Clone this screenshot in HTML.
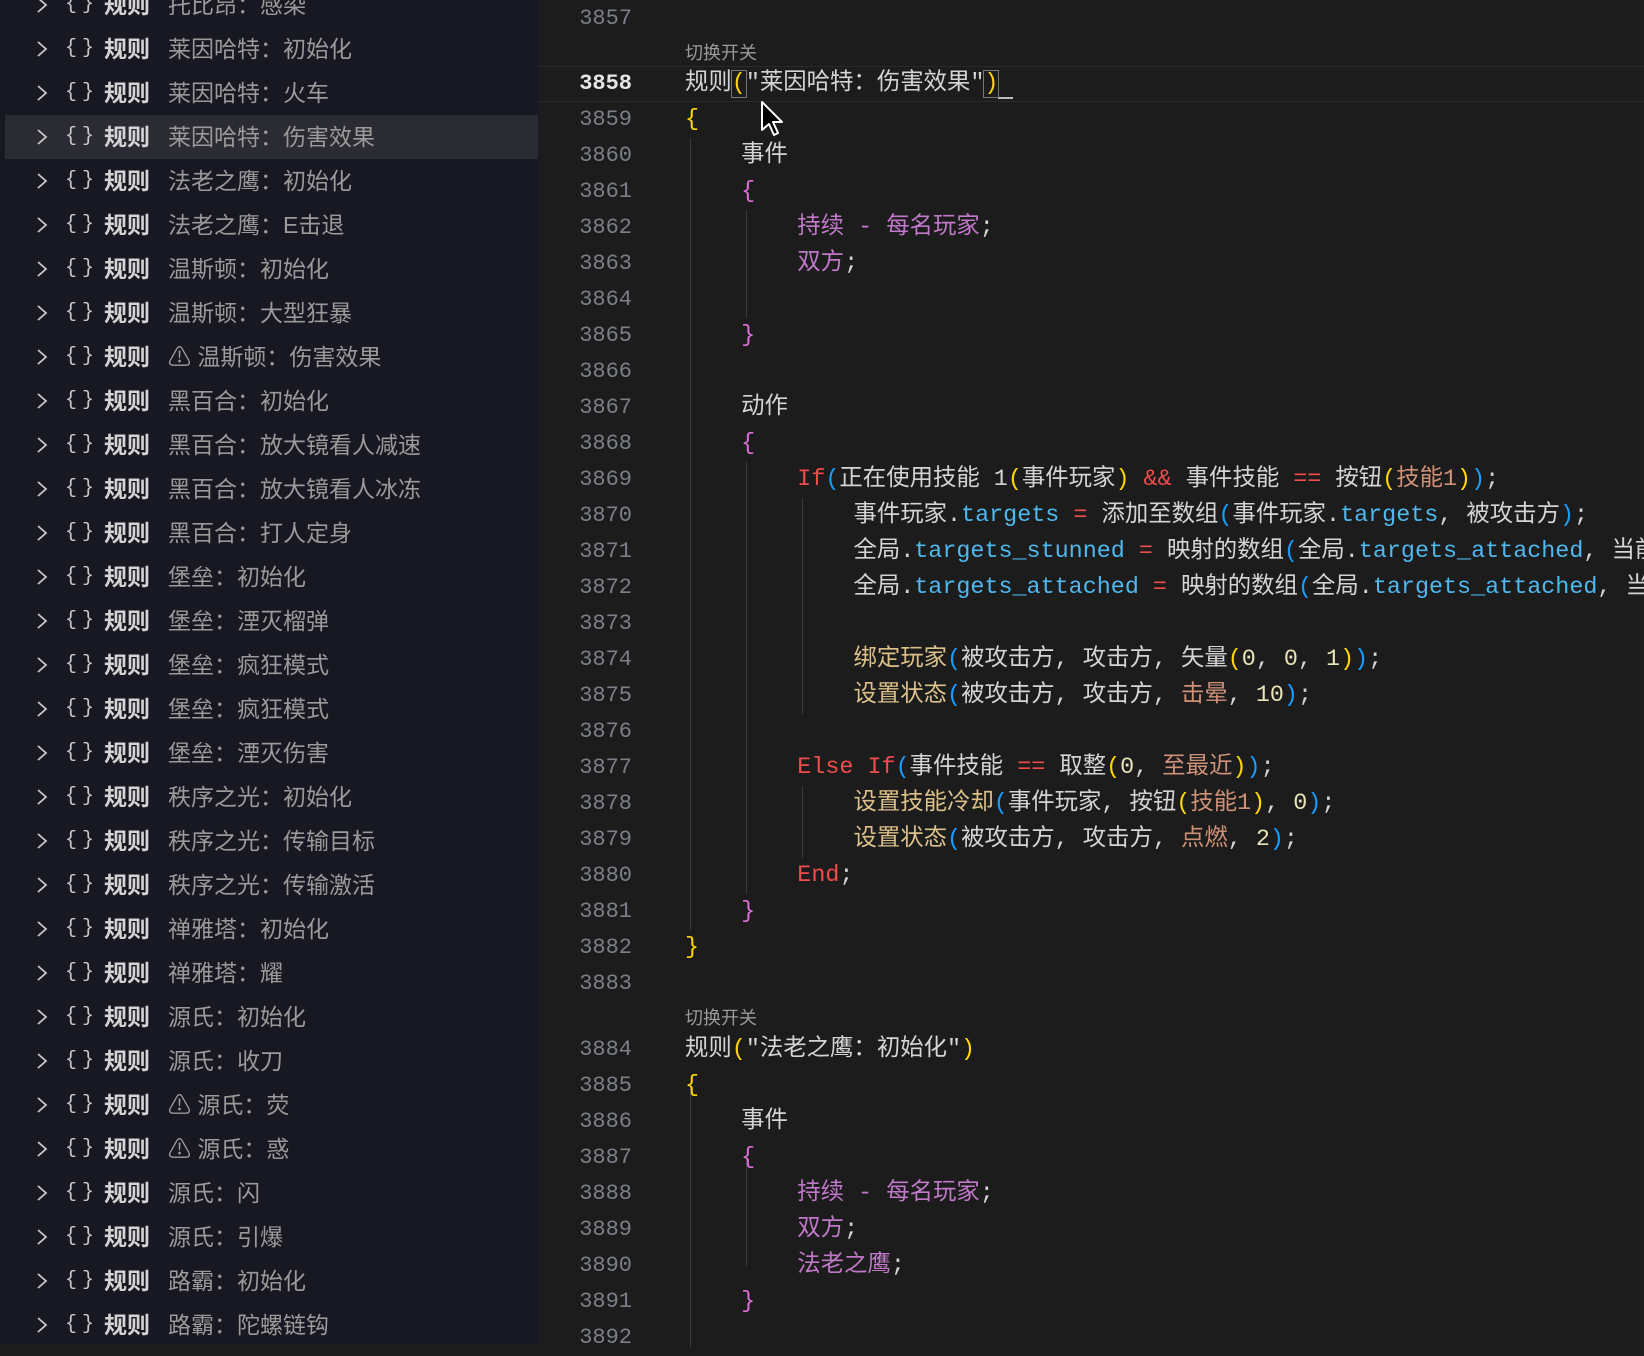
<!DOCTYPE html>
<html><head><meta charset="utf-8"><style>
*{margin:0;padding:0;box-sizing:border-box}
body{width:1644px;height:1344px;overflow:hidden;background:#1c1c1c;position:relative;font-family:"Liberation Mono","Noto Sans CJK SC",monospace}
#side{position:absolute;left:0;top:0;width:538px;height:1344px;background:#171821}
.row{position:absolute;left:0;width:538px;height:44px;line-height:44px;font-family:"Liberation Sans","Noto Sans CJK SC",sans-serif;font-size:23px;color:#9a9a9a;white-space:nowrap}
.row.sel{background:#2b2c33;left:5px;width:533px}
.row .ch{position:absolute;left:36px;top:13px;width:12px;height:18px}
.row .br{position:absolute;left:65px;color:#c8c8c8;letter-spacing:5px;font-family:"Liberation Mono",monospace;font-size:20px}
.row .kw{position:absolute;left:104px;color:#d4d4d4;font-weight:bold}
.row .lb{position:absolute;left:168px}
.row.sel .ch{left:31px}.row.sel .br{left:60px}.row.sel .kw{left:99px}.row.sel .lb{left:163px}
.ln{position:absolute;left:540px;width:92px;text-align:right;font-size:22px;color:#7b7f87;height:36px;line-height:36px;font-family:"Liberation Mono",monospace}
.ln.act{color:#e6e6e6;font-weight:bold}
.cl{position:absolute;left:685px;height:36px;line-height:36px;font-size:23.4px;color:#d4d4d4;white-space:pre}
.lens{position:absolute;left:685px;font-size:18px;color:#9a9a9a;font-family:"Liberation Sans","Noto Sans CJK SC",sans-serif}
.g{position:absolute;width:1px;background:#3c3c3c}
.y{color:#ffd700}.p{color:#da70d6}.b{color:#179fff}.r{color:#f14c4c}.v{color:#c078c8}.f{color:#dcc08a}.o{color:#ce9178}.i{color:#4fb8ee}.n{color:#e8e3b8}
.box{outline:1px solid #777;}
#code{position:absolute;left:0;top:3px;width:1644px;height:1344px}
</style></head><body>
<svg width="0" height="0" style="position:absolute"><defs><symbol id="chev" viewBox="0 0 12 18"><path d="M2 2 L10 9 L2 16" fill="none" stroke="#c8c8c8" stroke-width="1.8"/></symbol></defs></svg>
<div id="side">
<div class="row" style="top:-17px"><svg class="ch"><use href="#chev"/></svg><span class="br">{}</span><span class="kw">规则</span><span class="lb">托比昂：感染</span></div>
<div class="row" style="top:27px"><svg class="ch"><use href="#chev"/></svg><span class="br">{}</span><span class="kw">规则</span><span class="lb">莱因哈特：初始化</span></div>
<div class="row" style="top:71px"><svg class="ch"><use href="#chev"/></svg><span class="br">{}</span><span class="kw">规则</span><span class="lb">莱因哈特：火车</span></div>
<div class="row sel" style="top:115px"><svg class="ch"><use href="#chev"/></svg><span class="br">{}</span><span class="kw">规则</span><span class="lb">莱因哈特：伤害效果</span></div>
<div class="row" style="top:159px"><svg class="ch"><use href="#chev"/></svg><span class="br">{}</span><span class="kw">规则</span><span class="lb">法老之鹰：初始化</span></div>
<div class="row" style="top:203px"><svg class="ch"><use href="#chev"/></svg><span class="br">{}</span><span class="kw">规则</span><span class="lb">法老之鹰：E击退</span></div>
<div class="row" style="top:247px"><svg class="ch"><use href="#chev"/></svg><span class="br">{}</span><span class="kw">规则</span><span class="lb">温斯顿：初始化</span></div>
<div class="row" style="top:291px"><svg class="ch"><use href="#chev"/></svg><span class="br">{}</span><span class="kw">规则</span><span class="lb">温斯顿：大型狂暴</span></div>
<div class="row" style="top:335px"><svg class="ch"><use href="#chev"/></svg><span class="br">{}</span><span class="kw">规则</span><span class="lb">⚠ 温斯顿：伤害效果</span></div>
<div class="row" style="top:379px"><svg class="ch"><use href="#chev"/></svg><span class="br">{}</span><span class="kw">规则</span><span class="lb">黑百合：初始化</span></div>
<div class="row" style="top:423px"><svg class="ch"><use href="#chev"/></svg><span class="br">{}</span><span class="kw">规则</span><span class="lb">黑百合：放大镜看人减速</span></div>
<div class="row" style="top:467px"><svg class="ch"><use href="#chev"/></svg><span class="br">{}</span><span class="kw">规则</span><span class="lb">黑百合：放大镜看人冰冻</span></div>
<div class="row" style="top:511px"><svg class="ch"><use href="#chev"/></svg><span class="br">{}</span><span class="kw">规则</span><span class="lb">黑百合：打人定身</span></div>
<div class="row" style="top:555px"><svg class="ch"><use href="#chev"/></svg><span class="br">{}</span><span class="kw">规则</span><span class="lb">堡垒：初始化</span></div>
<div class="row" style="top:599px"><svg class="ch"><use href="#chev"/></svg><span class="br">{}</span><span class="kw">规则</span><span class="lb">堡垒：湮灭榴弹</span></div>
<div class="row" style="top:643px"><svg class="ch"><use href="#chev"/></svg><span class="br">{}</span><span class="kw">规则</span><span class="lb">堡垒：疯狂模式</span></div>
<div class="row" style="top:687px"><svg class="ch"><use href="#chev"/></svg><span class="br">{}</span><span class="kw">规则</span><span class="lb">堡垒：疯狂模式</span></div>
<div class="row" style="top:731px"><svg class="ch"><use href="#chev"/></svg><span class="br">{}</span><span class="kw">规则</span><span class="lb">堡垒：湮灭伤害</span></div>
<div class="row" style="top:775px"><svg class="ch"><use href="#chev"/></svg><span class="br">{}</span><span class="kw">规则</span><span class="lb">秩序之光：初始化</span></div>
<div class="row" style="top:819px"><svg class="ch"><use href="#chev"/></svg><span class="br">{}</span><span class="kw">规则</span><span class="lb">秩序之光：传输目标</span></div>
<div class="row" style="top:863px"><svg class="ch"><use href="#chev"/></svg><span class="br">{}</span><span class="kw">规则</span><span class="lb">秩序之光：传输激活</span></div>
<div class="row" style="top:907px"><svg class="ch"><use href="#chev"/></svg><span class="br">{}</span><span class="kw">规则</span><span class="lb">禅雅塔：初始化</span></div>
<div class="row" style="top:951px"><svg class="ch"><use href="#chev"/></svg><span class="br">{}</span><span class="kw">规则</span><span class="lb">禅雅塔：耀</span></div>
<div class="row" style="top:995px"><svg class="ch"><use href="#chev"/></svg><span class="br">{}</span><span class="kw">规则</span><span class="lb">源氏：初始化</span></div>
<div class="row" style="top:1039px"><svg class="ch"><use href="#chev"/></svg><span class="br">{}</span><span class="kw">规则</span><span class="lb">源氏：收刀</span></div>
<div class="row" style="top:1083px"><svg class="ch"><use href="#chev"/></svg><span class="br">{}</span><span class="kw">规则</span><span class="lb">⚠ 源氏：荧</span></div>
<div class="row" style="top:1127px"><svg class="ch"><use href="#chev"/></svg><span class="br">{}</span><span class="kw">规则</span><span class="lb">⚠ 源氏：惑</span></div>
<div class="row" style="top:1171px"><svg class="ch"><use href="#chev"/></svg><span class="br">{}</span><span class="kw">规则</span><span class="lb">源氏：闪</span></div>
<div class="row" style="top:1215px"><svg class="ch"><use href="#chev"/></svg><span class="br">{}</span><span class="kw">规则</span><span class="lb">源氏：引爆</span></div>
<div class="row" style="top:1259px"><svg class="ch"><use href="#chev"/></svg><span class="br">{}</span><span class="kw">规则</span><span class="lb">路霸：初始化</span></div>
<div class="row" style="top:1303px"><svg class="ch"><use href="#chev"/></svg><span class="br">{}</span><span class="kw">规则</span><span class="lb">路霸：陀螺链钩</span></div>
</div>

<div id="code">
<div class="g" style="left:690px;top:135px;height:792px"></div>
<div class="g" style="left:746px;top:207px;height:108px"></div>
<div class="g" style="left:746px;top:459px;height:432px"></div>
<div class="g" style="left:802px;top:495px;height:216px"></div>
<div class="g" style="left:802px;top:783px;height:72px"></div>
<div class="g" style="left:690px;top:1083px;height:261px"></div>
<div class="g" style="left:746px;top:1155px;height:108px"></div>

<div style="position:absolute;left:538px;top:63px;width:1106px;height:36px;border-top:1px solid #2a2a2a;border-bottom:1px solid #2a2a2a"></div>

<div class="ln" style="top:-2px">3857</div>
<div class="lens" style="top:36px">切换开关</div>
<div class="ln act" style="top:63px">3858</div>
<div class="ln" style="top:99px">3859</div>
<div class="ln" style="top:135px">3860</div>
<div class="ln" style="top:171px">3861</div>
<div class="ln" style="top:207px">3862</div>
<div class="ln" style="top:243px">3863</div>
<div class="ln" style="top:279px">3864</div>
<div class="ln" style="top:315px">3865</div>
<div class="ln" style="top:351px">3866</div>
<div class="ln" style="top:387px">3867</div>
<div class="ln" style="top:423px">3868</div>
<div class="ln" style="top:459px">3869</div>
<div class="ln" style="top:495px">3870</div>
<div class="ln" style="top:531px">3871</div>
<div class="ln" style="top:567px">3872</div>
<div class="ln" style="top:603px">3873</div>
<div class="ln" style="top:639px">3874</div>
<div class="ln" style="top:675px">3875</div>
<div class="ln" style="top:711px">3876</div>
<div class="ln" style="top:747px">3877</div>
<div class="ln" style="top:783px">3878</div>
<div class="ln" style="top:819px">3879</div>
<div class="ln" style="top:855px">3880</div>
<div class="ln" style="top:891px">3881</div>
<div class="ln" style="top:927px">3882</div>
<div class="ln" style="top:963px">3883</div>
<div class="lens" style="top:1001px">切换开关</div>
<div class="ln" style="top:1029px">3884</div>
<div class="ln" style="top:1065px">3885</div>
<div class="ln" style="top:1101px">3886</div>
<div class="ln" style="top:1137px">3887</div>
<div class="ln" style="top:1173px">3888</div>
<div class="ln" style="top:1209px">3889</div>
<div class="ln" style="top:1245px">3890</div>
<div class="ln" style="top:1281px">3891</div>
<div class="ln" style="top:1317px">3892</div>

<div class="cl" style="top:63px">规则<span class="y box">(</span>"莱因哈特：伤害效果"<span class="y box">)</span><span style="border-bottom:2px solid #bbb"> </span></div>
<div class="cl" style="top:99px"><span class="y">{</span></div>
<div class="cl" style="top:135px">    事件</div>
<div class="cl" style="top:171px">    <span class="p">{</span></div>
<div class="cl" style="top:207px">        <span class="v">持续 - 每名玩家</span>;</div>
<div class="cl" style="top:243px">        <span class="v">双方</span>;</div>
<div class="cl" style="top:315px">    <span class="p">}</span></div>
<div class="cl" style="top:387px">    动作</div>
<div class="cl" style="top:423px">    <span class="p">{</span></div>
<div class="cl" style="top:459px">        <span class="r">If</span><span class="b">(</span>正在使用技能 1<span class="y">(</span>事件玩家<span class="y">)</span> <span class="r">&amp;&amp;</span> 事件技能 <span class="r">==</span> 按钮<span class="y">(</span><span class="o">技能1</span><span class="y">)</span><span class="b">)</span>;</div>
<div class="cl" style="top:495px">            事件玩家.<span class="i">targets</span> <span class="r">=</span> 添加至数组<span class="b">(</span>事件玩家.<span class="i">targets</span>, 被攻击方<span class="b">)</span>;</div>
<div class="cl" style="top:531px">            全局.<span class="i">targets_stunned</span> <span class="r">=</span> 映射的数组<span class="b">(</span>全局.<span class="i">targets_attached</span>, 当前</div>
<div class="cl" style="top:567px">            全局.<span class="i">targets_attached</span> <span class="r">=</span> 映射的数组<span class="b">(</span>全局.<span class="i">targets_attached</span>, 当前</div>
<div class="cl" style="top:639px">            <span class="f">绑定玩家</span><span class="b">(</span>被攻击方, 攻击方, 矢量<span class="y">(</span><span class="n">0</span>, <span class="n">0</span>, <span class="n">1</span><span class="y">)</span><span class="b">)</span>;</div>
<div class="cl" style="top:675px">            <span class="f">设置状态</span><span class="b">(</span>被攻击方, 攻击方, <span class="o">击晕</span>, <span class="n">10</span><span class="b">)</span>;</div>
<div class="cl" style="top:747px">        <span class="r">Else If</span><span class="b">(</span>事件技能 <span class="r">==</span> 取整<span class="y">(</span><span class="n">0</span>, <span class="o">至最近</span><span class="y">)</span><span class="b">)</span>;</div>
<div class="cl" style="top:783px">            <span class="f">设置技能冷却</span><span class="b">(</span>事件玩家, 按钮<span class="y">(</span><span class="o">技能1</span><span class="y">)</span>, <span class="n">0</span><span class="b">)</span>;</div>
<div class="cl" style="top:819px">            <span class="f">设置状态</span><span class="b">(</span>被攻击方, 攻击方, <span class="o">点燃</span>, <span class="n">2</span><span class="b">)</span>;</div>
<div class="cl" style="top:855px">        <span class="r">End</span>;</div>
<div class="cl" style="top:891px">    <span class="p">}</span></div>
<div class="cl" style="top:927px"><span class="y">}</span></div>
<div class="cl" style="top:1029px">规则<span class="y">(</span>"法老之鹰：初始化"<span class="y">)</span></div>
<div class="cl" style="top:1065px"><span class="y">{</span></div>
<div class="cl" style="top:1101px">    事件</div>
<div class="cl" style="top:1137px">    <span class="p">{</span></div>
<div class="cl" style="top:1173px">        <span class="v">持续 - 每名玩家</span>;</div>
<div class="cl" style="top:1209px">        <span class="v">双方</span>;</div>
<div class="cl" style="top:1245px">        <span class="v">法老之鹰</span>;</div>
<div class="cl" style="top:1281px">    <span class="p">}</span></div>
</div>

<svg style="position:absolute;left:760px;top:100px" width="30" height="40" viewBox="0 0 30 40"><path d="M2 2 L2 30 L9 24 L14 35 L18 33 L13 22 L22 22 Z" fill="#000" stroke="#fff" stroke-width="2" stroke-linejoin="round"/></svg>
</body></html>
